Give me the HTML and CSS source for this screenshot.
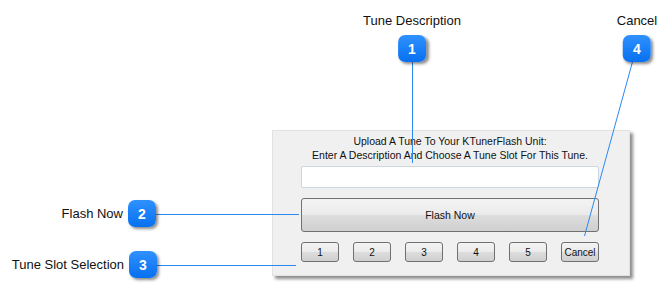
FILE: index.html
```html
<!DOCTYPE html>
<html lang="en">

<head>
    <meta charset="UTF-8">
    <meta name="viewport" content="width=device-width, initial-scale=1.0">
    <title>Flash Tune</title>
    <link rel="stylesheet" href="styles.css">
</head>

<body>
    <div class="canvas">

        <section class="dialog">
            <p class="intro">Upload A Tune To Your KTunerFlash Unit:<br>Enter A Description And Choose A Tune Slot For This Tune.</p>
            <input class="desc" type="text">
            <button class="btn flash">Flash Now</button>
            <div class="slots">
                <button class="btn slot">1</button>
                <button class="btn slot">2</button>
                <button class="btn slot">3</button>
                <button class="btn slot">4</button>
                <button class="btn slot">5</button>
                <button class="btn slot">Cancel</button>
            </div>
        </section>

        <svg class="leaders" width="672" height="290">
            <line x1="412.5" y1="60" x2="412.5" y2="163" />
            <line x1="633" y1="60" x2="584.5" y2="236" />
            <line x1="155" y1="214.5" x2="299" y2="214.5" />
            <line x1="156" y1="265.5" x2="296" y2="265.5" />
        </svg>

        <div class="callout top c1">
            <span class="label">Tune Description</span>
            <span class="badge">1</span>
        </div>
        <div class="callout top c4">
            <span class="label">Cancel</span>
            <span class="badge">4</span>
        </div>
        <div class="callout side c2">
            <span class="label">Flash Now</span>
            <span class="badge">2</span>
        </div>
        <div class="callout side c3">
            <span class="label">Tune Slot Selection</span>
            <span class="badge">3</span>
        </div>

    </div>
</body>

</html>
```

FILE: styles.css
```css
body {
    margin: 0;
    background: #ffffff;
    font-family: "Liberation Sans", Arial, sans-serif;
}

.canvas {
    position: relative;
    width: 672px;
    height: 290px;
    overflow: hidden;
}

/* dialog screenshot */
.dialog {
    position: absolute;
    left: 272px;
    top: 130px;
    width: 358px;
    height: 146px;
    box-sizing: border-box;
    padding: 3px 30px 0 28px;
    background: #f0f0f0;
    border: 1px solid #e2e2e2;
    box-shadow: 3px 3px 3px rgba(0, 0, 0, 0.45);
    display: flex;
    flex-direction: column;
}

.intro {
    margin: 0;
    font-size: 10.5px;
    line-height: 14px;
    text-align: center;
    color: #111;
}

.desc {
    margin: 4px 0 0 0;
    height: 22px;
    box-sizing: border-box;
    border: 1px solid #cdd5df;
    border-radius: 2px;
    background: #fff;
}

.btn {
    box-sizing: border-box;
    border: 1px solid #707070;
    border-radius: 3px;
    background: linear-gradient(#f3f3f3 0%, #ebebeb 48%, #dddddd 52%, #cfcfcf 100%);
    font-family: "Liberation Sans", Arial, sans-serif;
    font-size: 10px;
    color: #111;
    padding: 0;
}

.flash {
    margin-top: 10px;
    height: 34px;
    font-size: 10.5px;
}

.slots {
    margin-top: 10px;
    display: flex;
    gap: 14px;
}

.slot {
    width: 38px;
    height: 20px;
}

/* leader lines */
.leaders {
    position: absolute;
    left: 0;
    top: 0;
}

.leaders line {
    stroke: #2b89f0;
    stroke-width: 1;
}

/* callouts */
.callout {
    position: absolute;
    display: flex;
    align-items: center;
}

.callout.top {
    flex-direction: column;
    gap: 7px;
    top: 13px;
    transform: translateX(-50%);
}

.callout.side {
    gap: 5px;
}

.label {
    font-size: 13px;
    line-height: 15px;
    color: #111;
    white-space: nowrap;
}

.badge {
    width: 28px;
    height: 27px;
    border-radius: 7px;
    background: linear-gradient(#2f91ff, #0870f0);
    box-shadow: 2px 2px 3px rgba(0, 0, 0, 0.45);
    color: #fff;
    font-weight: bold;
    font-size: 14px;
    display: flex;
    align-items: center;
    justify-content: center;
}

.c1 {
    left: 412px;
}

.c4 {
    left: 637px;
}

.c2 {
    right: 516px;
    top: 200px;
}

.c3 {
    right: 515px;
    top: 251px;
}
```
